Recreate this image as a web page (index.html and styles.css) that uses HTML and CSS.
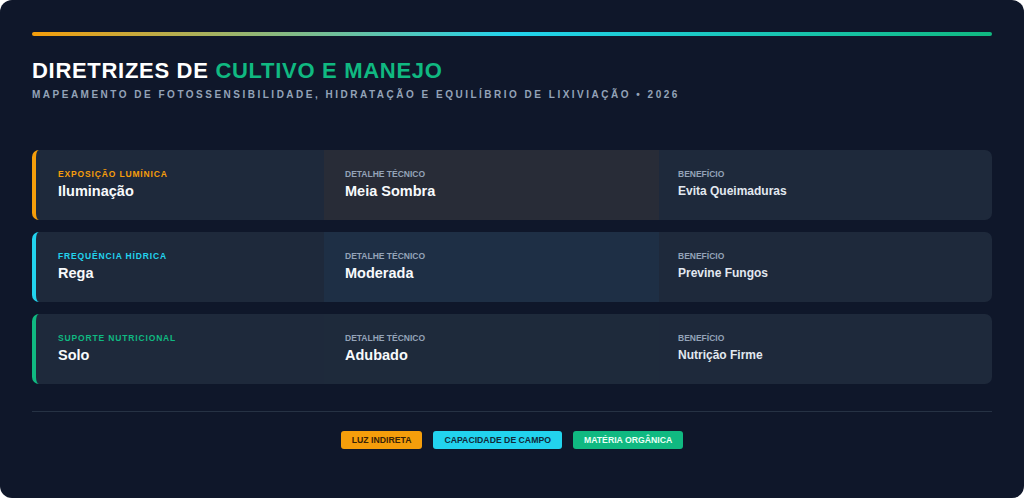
FILE: index.html
```html
<!DOCTYPE html>
<html lang="pt">
<head>
<meta charset="utf-8">
<title>Diretrizes de Cultivo e Manejo</title>
<link rel="stylesheet" href="styles.css">
</head>
<body>
<main class="panel">
  <div class="accent-bar"></div>
  <header class="head">
    <h1 class="title">DIRETRIZES DE <span class="hl">CULTIVO E MANEJO</span></h1>
    <p class="subtitle">MAPEAMENTO DE FOTOSSENSIBILIDADE, HIDRATAÇÃO E EQUILÍBRIO DE LIXIVIAÇÃO • 2026</p>
  </header>

  <section class="rows">
    <div class="row row-amber">
      <div class="cell cell-main">
        <span class="tag">EXPOSIÇÃO LUMÍNICA</span>
        <span class="val">Iluminação</span>
      </div>
      <div class="cell cell-mid">
        <span class="lbl">DETALHE TÉCNICO</span>
        <span class="val">Meia Sombra</span>
      </div>
      <div class="cell cell-end">
        <span class="lbl">BENEFÍCIO</span>
        <span class="val-sm">Evita Queimaduras</span>
      </div>
    </div>

    <div class="row row-cyan">
      <div class="cell cell-main">
        <span class="tag">FREQUÊNCIA HÍDRICA</span>
        <span class="val">Rega</span>
      </div>
      <div class="cell cell-mid">
        <span class="lbl">DETALHE TÉCNICO</span>
        <span class="val">Moderada</span>
      </div>
      <div class="cell cell-end">
        <span class="lbl">BENEFÍCIO</span>
        <span class="val-sm">Previne Fungos</span>
      </div>
    </div>

    <div class="row row-green">
      <div class="cell cell-main">
        <span class="tag">SUPORTE NUTRICIONAL</span>
        <span class="val">Solo</span>
      </div>
      <div class="cell cell-mid">
        <span class="lbl">DETALHE TÉCNICO</span>
        <span class="val">Adubado</span>
      </div>
      <div class="cell cell-end">
        <span class="lbl">BENEFÍCIO</span>
        <span class="val-sm">Nutrição Firme</span>
      </div>
    </div>
  </section>

  <footer class="foot">
    <span class="chip chip-amber">LUZ INDIRETA</span>
    <span class="chip chip-cyan">CAPACIDADE DE CAMPO</span>
    <span class="chip chip-green">MATÉRIA ORGÂNICA</span>
  </footer>
</main>
</body>
</html>
```

FILE: styles.css
```css
* { box-sizing: border-box; }
html, body {
  margin: 0;
  padding: 0;
  background: #ffffff;
}
body {
  font-family: "Liberation Sans", Arial, sans-serif;
  color: #f1f5f9;
}
.panel {
  width: 1024px;
  height: 498px;
  background: #0f172a;
  border-radius: 12px;
  padding: 32px 32px 0 32px;
  display: flex;
  flex-direction: column;
  overflow: hidden;
}
.accent-bar {
  height: 4px;
  border-radius: 2px;
  background: linear-gradient(90deg, #f59e0b 0%, #22d3ee 50%, #10b981 100%);
}
.head {
  margin-top: 22px;
}
.title {
  margin: 0;
  font-size: 22px;
  font-weight: 700;
  letter-spacing: 0.7px;
  line-height: 26px;
  color: #ffffff;
}
.hl { color: #10b981; }
.subtitle {
  margin: 4px 0 0 0;
  font-size: 10px;
  font-weight: 700;
  letter-spacing: 2.5px;
  line-height: 14px;
  color: #94a3b8;
}
.rows {
  margin-top: 48px;
  display: flex;
  flex-direction: column;
  gap: 12px;
}
.row {
  height: 70px;
  display: grid;
  grid-template-columns: 288px 335px 1fr;
  background: #1e293b;
  border-radius: 7px;
  border-left: 4px solid;
  overflow: hidden;
}
.row-amber { border-left-color: #f59e0b; }
.row-cyan { border-left-color: #22d3ee; }
.row-green { border-left-color: #10b981; }
.cell {
  display: flex;
  flex-direction: column;
  justify-content: center;
  gap: 2px;
  padding: 0 20px 1px 21px;
}
.cell-main { padding-left: 22px; }
.row-amber .cell-mid { background: #282c37; }
.row-cyan .cell-mid { background: #1e2f45; }
.row-green .cell-mid { background: #1e2a3b; }
.cell-end { padding-left: 19px; }
.tag {
  font-size: 8.5px;
  font-weight: 700;
  letter-spacing: 0.85px;
  line-height: 11px;
}
.row-amber .tag { color: #f59e0b; }
.row-cyan .tag { color: #22d3ee; }
.row-green .tag { color: #10b981; }
.lbl {
  font-size: 8.5px;
  font-weight: 700;
  line-height: 11px;
  color: #94a3b8;
}
.val {
  font-size: 14.5px;
  font-weight: 700;
  line-height: 18px;
  color: #f8fafc;
}
.val-sm {
  font-size: 12px;
  font-weight: 700;
  line-height: 18px;
  color: #e2e8f0;
}
.foot {
  margin-top: 27px;
  border-top: 1px solid #263244;
  padding-top: 19px;
  display: flex;
  justify-content: center;
  gap: 11px;
}
.chip {
  display: inline-flex;
  align-items: center;
  height: 18px;
  padding: 0 11px;
  border-radius: 3px;
  font-size: 8.7px;
  font-weight: 700;
  color: #0f172a;
}
.chip-amber { background: #f59e0b; color: #3a2306; }
.chip-cyan { background: #22d3ee; color: #0f2a3a; }
.chip-green { background: #10b981; color: #eafff6; }
```
